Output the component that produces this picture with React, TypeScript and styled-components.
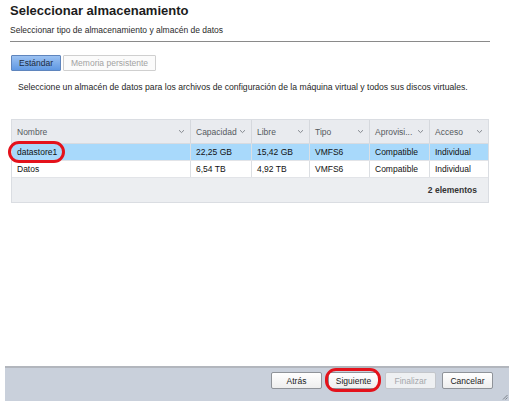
import React from "react";
import styled, { createGlobalStyle } from "styled-components";

const Global = createGlobalStyle`
  html, body { margin: 0; padding: 0; background: #ffffff; }
  body { font-family: "Liberation Sans", Arial, Helvetica, sans-serif; color: #1d1d1d; }
  * { box-sizing: border-box; }
`;

const Page = styled.div`
  width: 509px;
  height: 401px;
  display: flex;
  flex-direction: column;
  overflow: hidden;
  background: #fff;
`;

const Content = styled.div`
  flex: 1;
  display: flex;
  flex-direction: column;
  padding: 3px 19px 0 10px;
`;

const Title = styled.h1`
  margin: 0;
  font-size: 13px;
  line-height: 16px;
  font-weight: bold;
  color: #1c1c1c;
`;

const Subtitle = styled.div`
  margin-top: 6px;
  font-size: 8.5px;
  line-height: 11px;
  color: #2a2a2a;
  padding-bottom: 5px;
  border-bottom: 1px solid #8a8a8a;
`;

const Tabs = styled.div`
  display: flex;
  gap: 2px;
  margin-top: 13px;
  margin-left: 1px;
`;

const Tab = styled.div<{ $active?: boolean }>`
  height: 16px;
  padding: 0 7px;
  display: flex;
  align-items: center;
  font-size: 8.5px;
  border-radius: 1px;
  border: 1px solid ${(p) => (p.$active ? "#5f85bd" : "#cfcfcf")};
  background: ${(p) =>
    p.$active ? "linear-gradient(#9cc2f2, #5f98e3)" : "#fbfbfb"};
  color: ${(p) => (p.$active ? "#1b2a40" : "#a2a2a2")};
`;

const Description = styled.div`
  margin-top: 11px;
  margin-left: 8px;
  font-size: 8.65px;
  line-height: 11px;
  color: #1f1f1f;
`;

const Table = styled.div`
  margin-top: 26px;
  margin-left: 1px;
  width: 478px;
  border: 1px solid #dadde2;
  display: flex;
  flex-direction: column;
  font-size: 8.5px;
`;

const cols = "178px 61px 58px 60px 60px 1fr";

const HeaderRow = styled.div`
  display: grid;
  grid-template-columns: ${cols};
  height: 24px;
  background: #e9ebef;
  border-bottom: 1px solid #d8dbe0;
`;

const HeaderCell = styled.div`
  display: flex;
  align-items: center;
  justify-content: space-between;
  padding: 0 5px;
  color: #555a60;
  border-left: 1px solid #d5d8dd;
  &:first-child { border-left: none; }
`;

const Row = styled.div<{ $selected?: boolean }>`
  display: grid;
  grid-template-columns: ${cols};
  height: 17px;
  background: ${(p) => (p.$selected ? "#a8d9fb" : "#ffffff")};
  border-bottom: 1px solid #e2e4e8;
`;

const Cell = styled.div`
  position: relative;
  display: flex;
  align-items: center;
  padding: 0 5px;
  color: #111;
  border-left: 1px solid #dcdfe3;
  white-space: nowrap;
  &:first-child { border-left: none; }
`;

const Footer = styled.div`
  height: 24px;
  background: #eceef1;
  display: flex;
  align-items: center;
  justify-content: flex-end;
  padding-right: 11px;
  font-weight: bold;
  color: #333;
  font-size: 8.5px;
`;

const Highlight = styled.div<{ $l: number; $t: number; $w: number; $h: number }>`
  position: absolute;
  left: ${(p) => p.$l}px;
  top: ${(p) => p.$t}px;
  width: ${(p) => p.$w}px;
  height: ${(p) => p.$h}px;
  border: 3px solid #e4121b;
  border-radius: 11px;
  pointer-events: none;
`;

const BottomBar = styled.div`
  position: relative;
  margin-left: 5px;
  height: 35px;
  background: #c9d0db;
  border-top: 2px solid #b2b6bd;
  display: flex;
  align-items: flex-start;
  justify-content: flex-end;
  gap: 6px;
  padding-right: 16px;
  padding-top: 4px;
`;

const ButtonWrap = styled.div`
  position: relative;
`;

const Button = styled.button<{ $disabled?: boolean }>`
  display: block;
  width: 51px;
  height: 17px;
  padding: 0;
  font-family: inherit;
  font-size: 8.5px;
  border-radius: 2px;
  border: 1px solid ${(p) => (p.$disabled ? "#c3c6cb" : "#8f9399")};
  background: ${(p) => (p.$disabled ? "#eef0f2" : "linear-gradient(#ffffff, #eeeeee)")};
  color: ${(p) => (p.$disabled ? "#a4a7ab" : "#1a1a1a")};
`;

const Grip = styled.svg`
  position: absolute;
  right: 1px;
  bottom: 1px;
`;

const Chevron = () => (
  <svg width="7" height="5" viewBox="0 0 7 5">
    <path d="M1 1.2 L3.5 3.6 L6 1.2" fill="none" stroke="#7a7f86" strokeWidth="0.9" />
  </svg>
);

const headers = ["Nombre", "Capacidad", "Libre", "Tipo", "Aprovisi...", "Acceso"];
const rows = [
  ["datastore1", "22,25 GB", "15,42 GB", "VMFS6", "Compatible", "Individual"],
  ["Datos", "6,54 TB", "4,92 TB", "VMFS6", "Compatible", "Individual"],
];

export default function App() {
  return (
    <Page>
      <Global />
      <Content>
        <Title>Seleccionar almacenamiento</Title>
        <Subtitle>Seleccionar tipo de almacenamiento y almacén de datos</Subtitle>
        <Tabs>
          <Tab $active>Estándar</Tab>
          <Tab>Memoria persistente</Tab>
        </Tabs>
        <Description>
          Seleccione un almacén de datos para los archivos de configuración de la máquina virtual y todos sus discos virtuales.
        </Description>
        <Table>
          <HeaderRow>
            {headers.map((h) => (
              <HeaderCell key={h}>
                <span>{h}</span>
                <Chevron />
              </HeaderCell>
            ))}
          </HeaderRow>
          {rows.map((r, i) => (
            <Row key={r[0]} $selected={i === 0}>
              {r.map((c, j) => (
                <Cell key={j}>
                  {c}
                  {i === 0 && j === 0 && <Highlight $l={-4} $t={-3} $w={57} $h={22} />}
                </Cell>
              ))}
            </Row>
          ))}
          <Footer>2 elementos</Footer>
        </Table>
      </Content>
      <BottomBar>
        <Button>Atrás</Button>
        <ButtonWrap>
          <Button>Siguiente</Button>
          <Highlight $l={-3} $t={-4} $w={56} $h={24} />
        </ButtonWrap>
        <Button $disabled>Finalizar</Button>
        <Button>Cancelar</Button>
        <Grip width="6" height="6" viewBox="0 0 6 6">
          <path d="M5.5 1 L1 5.5 M5.5 3.5 L3.5 5.5" stroke="#6a6f76" strokeWidth="0.8" />
        </Grip>
      </BottomBar>
    </Page>
  );
}
